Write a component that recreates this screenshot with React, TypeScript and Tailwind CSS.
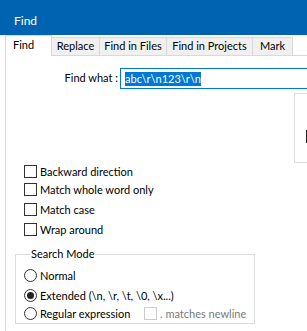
import React from "react";

const tabs = [
  { label: "Replace", w: "w-[48px]" },
  { label: "Find in Files", w: "w-[67px]" },
  { label: "Find in Projects", w: "w-[86px]" },
  { label: "Mark", w: "w-[40px]" },
];

const options = [
  { label: "Backward direction", mt: "mt-0" },
  { label: "Match whole word only", mt: "mt-[5px]" },
  { label: "Match case", mt: "mt-[7px]" },
  { label: "Wrap around", mt: "mt-[7px]" },
];

function CheckBox({ disabled }: { disabled?: boolean }) {
  return (
    <span
      className={`block h-[13px] w-[13px] shrink-0 border bg-white ${
        disabled ? "border-[#cccccc]" : "border-[#333333]"
      }`}
    />
  );
}

function Radio({ checked }: { checked?: boolean }) {
  return (
    <span className="flex h-[13px] w-[13px] shrink-0 items-center justify-center rounded-full border border-[#333333] bg-white">
      {checked && <span className="block h-[7px] w-[7px] rounded-full bg-[#222222]" />}
    </span>
  );
}

export default function App() {
  return (
    <div className="flex h-[331px] w-[307px] flex-col overflow-hidden bg-white font-['Lato','Liberation_Sans',sans-serif] text-[11px] text-black">
      {/* title bar */}
      <div className="flex h-[35px] shrink-0 items-center bg-[#0063b1] pl-[14px] pt-[6px] text-[12px] text-white">
        Find
      </div>

      {/* tabs */}
      <div className="flex h-[21px] shrink-0 items-end pl-[5px]">
        <div className="h-[21px] w-[47px] shrink-0 border-x border-t border-[#d9d9d9] bg-white pl-[7px] pt-[2px] leading-[14px]">
          Find
        </div>
        {tabs.map((t) => (
          <div
            key={t.label}
            className={`flex h-[19px] ${t.w} shrink-0 items-center justify-center border-y border-r border-[#d9d9d9] bg-[#f0f0f0]`}
          >
            {t.label}
          </div>
        ))}
        <div className="h-px flex-1 bg-[#d9d9d9]" />
      </div>

      {/* panel */}
      <div className="ml-[5px] flex flex-1 flex-col border-l border-[#d9d9d9]">
        <div className="mt-[12px] flex items-center">
          <div className="w-[112px] shrink-0 text-right">Find what :</div>
          <div className="ml-[2px] flex h-[21px] w-[220px] shrink-0 items-center border border-[#0078d7] pl-[4px]">
            <span className="bg-[#0078d7] leading-[14px] text-white">{"abc\\r\\n123\\r\\n"}</span>
          </div>
        </div>

        <div className="flex">
          <div className="w-[288px] shrink-0 pl-[18px] pt-[76px]">
            {options.map((o) => (
              <div key={o.label} className={`flex h-[13px] items-center ${o.mt}`}>
                <CheckBox />
                <span className="ml-[3px] leading-[13px]">{o.label}</span>
              </div>
            ))}
          </div>
          <div className="mt-[4px] h-[70px] w-[30px] shrink-0 border border-[#dcdcdc] pl-[11px] pt-[36px]">
            <div className="h-[13px] w-[2px] bg-[#222222]" />
          </div>
        </div>

        <fieldset className="ml-[9px] mt-[11px] w-[240px] border border-[#dcdcdc] pb-[3px] pl-[8px]">
          <legend className="ml-[6px] px-[1px] leading-[14px]">Search Mode</legend>
          <div className="mt-[8px] flex h-[13px] items-center">
            <Radio />
            <span className="ml-[3px] leading-[13px]">Normal</span>
          </div>
          <div className="mt-[7px] flex h-[13px] items-center">
            <Radio checked />
            <span className="ml-[3px] leading-[13px]">{"Extended (\\n, \\r, \\t, \\0, \\x...)"}</span>
          </div>
          <div className="mt-[5px] flex h-[13px] items-center">
            <Radio />
            <span className="ml-[3px] w-[104px] shrink-0 leading-[13px]">Regular expression</span>
            <CheckBox disabled />
            <span className="ml-[3px] leading-[13px] text-[#7a7a7a]">. matches newline</span>
          </div>
        </fieldset>
      </div>
    </div>
  );
}
